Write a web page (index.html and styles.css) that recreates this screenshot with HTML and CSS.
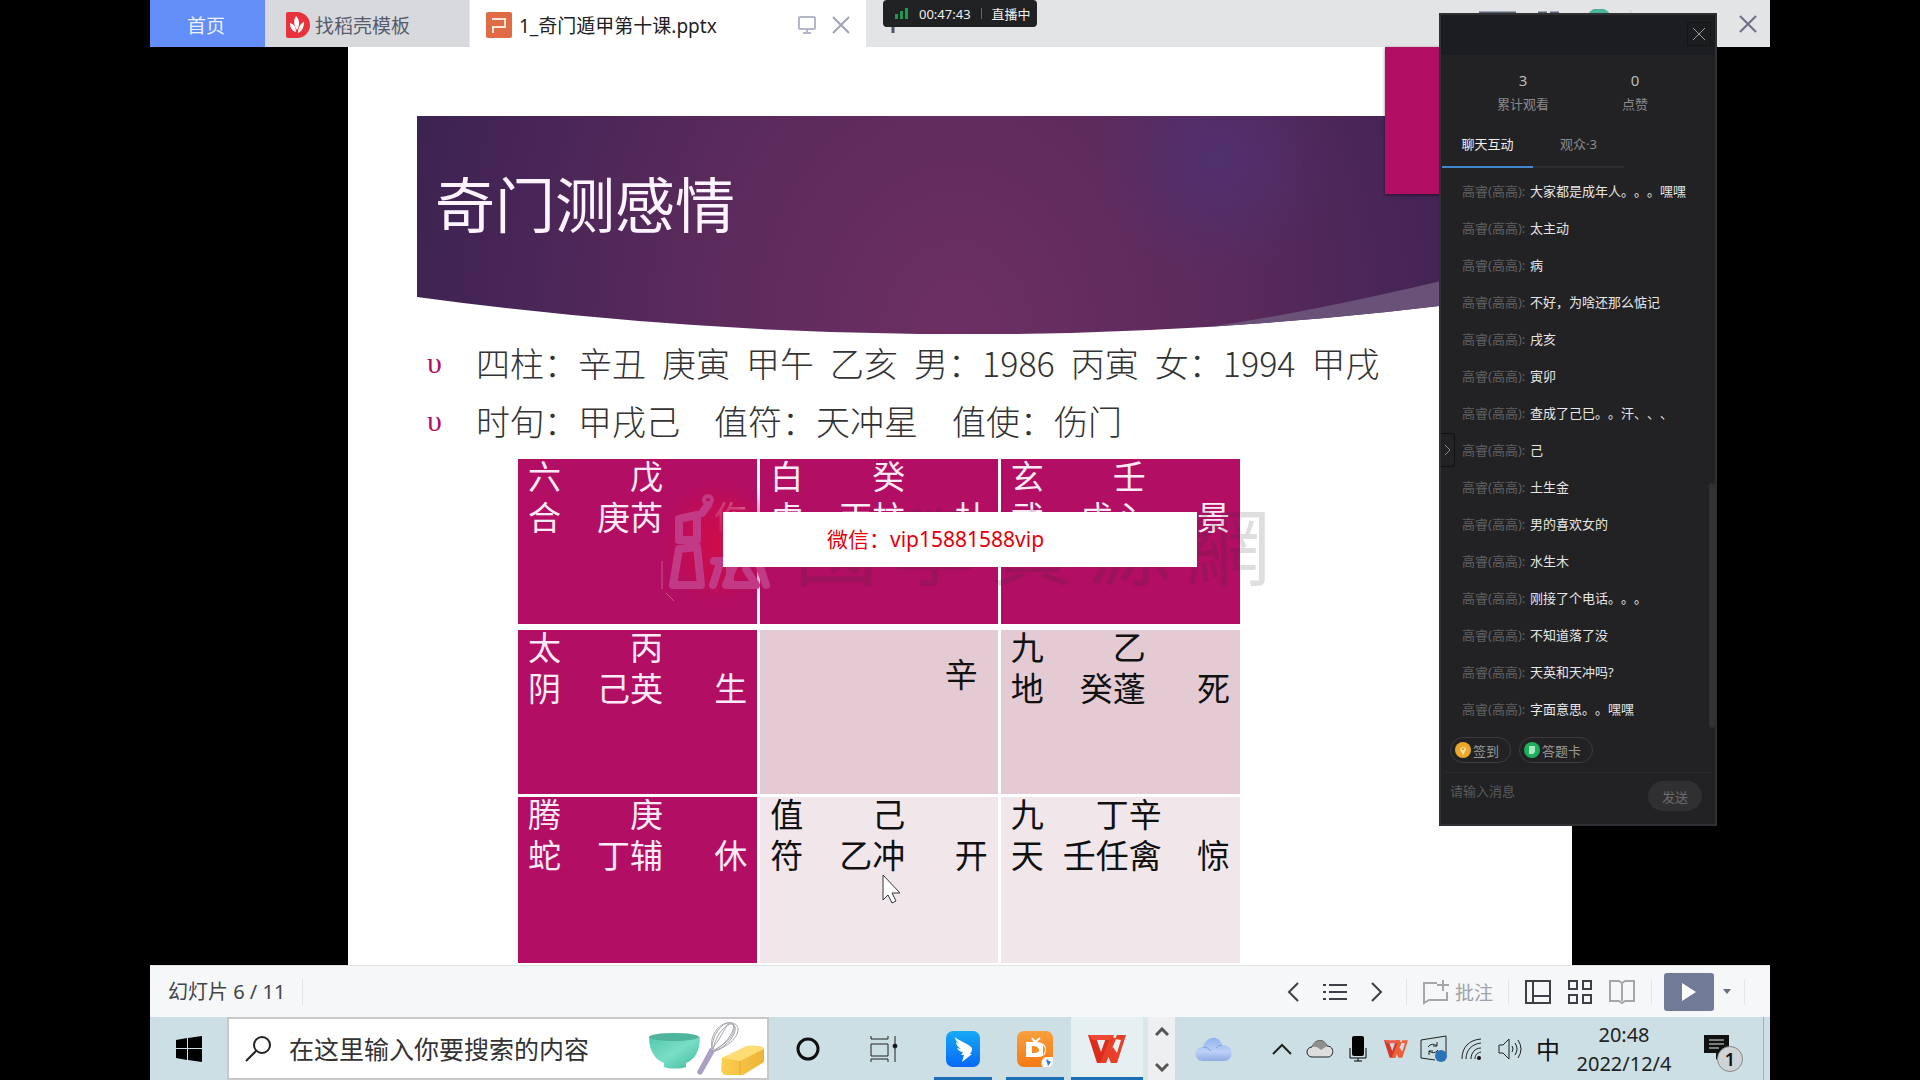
FILE: index.html
```html
<!DOCTYPE html>
<html lang="zh-CN">
<head>
<meta charset="utf-8">
<title>1_奇门遁甲第十课.pptx</title>
<link rel="stylesheet" href="styles.css">
</head>
<body>
<div class="screen">
  <header class="tabbar">
    <button class="tab tab-home">首页</button>
    <button class="tab tab-template">
      <svg width="24" height="26" viewBox="0 0 24 26"><path d="M2 0h9a13 13 0 0 1 0 26H2a2 2 0 0 1-2-2V2a2 2 0 0 1 2-2z" fill="#e8323c"/><path d="M10 4c4 4 4 9 1 14-3-5-4-9-1-14zM4 11c4 1 6 4 6 9-4-1-6-4-6-9zM18 10c0 5-2 9-6 11 0-5 2-9 6-11z" fill="#fff"/></svg>
      <span>找稻壳模板</span>
    </button>
    <div class="tab tab-file">
      <svg width="26" height="26" viewBox="0 0 26 26"><rect width="26" height="26" rx="2" fill="#e06c45"/><path d="M6 7h13v8H7v6" fill="none" stroke="#fbe6dd" stroke-width="2"/></svg>
      <span class="file-name">1_奇门遁甲第十课.pptx</span>
      <button class="icon-button" aria-label="放映">
        <svg width="18" height="20" viewBox="0 0 18 20" fill="none" stroke="#b3b7c6" stroke-width="2"><rect x="1" y="2" width="16" height="12" rx="1"/><path d="M9 14v4M5 18h8"/></svg>
      </button>
      <button class="icon-button" aria-label="关闭标签">
        <svg width="18" height="18" viewBox="0 0 18 18" stroke="#9fa3b2" stroke-width="2"><path d="M1 1l16 16M17 1L1 17"/></svg>
      </button>
    </div>
    <button class="new-tab" aria-label="新建"><svg width="16" height="16" viewBox="0 0 16 16" stroke="#4a5468" stroke-width="3"><path d="M8 0v16M0 8h16"/></svg></button>
    <div class="window-tools">
      <svg width="160" height="30" viewBox="0 0 160 30"><path d="M0 4h37M59 4h9M71 4h9" stroke="#5a6275" stroke-width="3"/><circle cx="120" cy="12" r="13" fill="#4bb59b"/><path d="M152 1v20" stroke="#c9cbd0"/></svg>
      <button class="icon-button" aria-label="关闭窗口">
        <svg width="18" height="18" viewBox="0 0 18 18" stroke="#6a7081" stroke-width="2"><path d="M1 1l16 16M17 1L1 17"/></svg>
      </button>
    </div>
    <div class="live-pill">
      <svg width="14" height="11" viewBox="0 0 14 11" fill="#1f9a4c"><rect y="6" width="3" height="5"/><rect x="5" y="3" width="3" height="8"/><rect x="10" width="3" height="11"/></svg>
      <span>00:47:43</span><i class="pill-line"></i><span>直播中</span>
    </div>
  </header>

  <main class="stage">
    <section class="slide">
      <div class="ribbon"></div>
      <div class="banner">
        <svg class="banner-art" viewBox="0 0 1086 218" preserveAspectRatio="none">
          <defs>
            <radialGradient id="glow" gradientUnits="userSpaceOnUse" cx="540" cy="215" r="590" gradientTransform="translate(0 -43) scale(1 1.2)">
              <stop offset="0" stop-color="#6d2f63"/><stop offset=".45" stop-color="#5b2a5c"/><stop offset=".8" stop-color="#452556"/><stop offset="1" stop-color="#3b2351"/>
            </radialGradient>
            <radialGradient id="spot" gradientUnits="userSpaceOnUse" cx="800" cy="42" r="120">
              <stop offset="0" stop-color="#50306f"/><stop offset="1" stop-color="#50306f" stop-opacity="0"/>
            </radialGradient>
            <clipPath id="curve"><path d="M0 0H1086V182Q543 255 0 181Z"/></clipPath>
          </defs>
          <g clip-path="url(#curve)">
            <rect width="1086" height="218" fill="url(#glow)"/>
            <rect width="1086" height="218" fill="url(#spot)"/>
            <path d="M785 212Q910 194 1086 150V218H785Z" fill="#6a5178"/>
          </g>
        </svg>
        <h1>奇门测感情</h1>
      </div>
      <ul class="points">
        <li class="spaced"><span>四柱：辛丑</span><span>庚寅</span><span>甲午</span><span>乙亥</span><span>男：1986</span><span>丙寅</span><span>女：1994</span><span>甲戌</span></li>
        <li>时旬：甲戌己　值符：天冲星　值使：伤门</li>
      </ul>
      <div class="board">
        <table>
          <tr class="row-top">
            <td><div class="cell"><span>六<br>合</span><span class="stem">戊<br>庚芮</span><span class="gate">伤</span></div></td>
            <td><div class="cell"><span>白<br>虎</span><span class="stem">癸<br>丙柱</span><span class="gate">杜</span></div></td>
            <td><div class="cell"><span>玄<br>武</span><span class="stem">壬<br>戊心</span><span class="gate">景</span></div></td>
          </tr>
          <tr class="row-middle">
            <td class="strong"><div class="cell"><span>太<br>阴</span><span class="stem">丙<br>己英</span><span class="gate">生</span></div></td>
            <td><div class="center-stem">辛</div></td>
            <td><div class="cell"><span>九<br>地</span><span class="stem">乙<br>癸蓬</span><span class="gate">死</span></div></td>
          </tr>
          <tr class="row-bottom">
            <td class="strong"><div class="cell"><span>腾<br>蛇</span><span class="stem">庚<br>丁辅</span><span class="gate">休</span></div></td>
            <td><div class="cell"><span>值<br>符</span><span class="stem">己<br>乙冲</span><span class="gate">开</span></div></td>
            <td><div class="cell cell-wide"><span>九<br>天</span><span class="stem">丁辛<br>壬任禽</span><span class="gate">惊</span></div></td>
          </tr>
        </table>
        <div class="watermark">
          <svg width="124" height="140" viewBox="0 0 124 140">
            <defs><radialGradient id="seal"><stop offset="0" stop-color="#cf0d49"/><stop offset=".6" stop-color="#c40c52" stop-opacity=".75"/><stop offset="1" stop-color="#b40c60" stop-opacity="0"/></radialGradient></defs>
            <rect width="124" height="140" fill="url(#seal)"/>
            <g fill="none" stroke="#c23a86" stroke-width="8" stroke-linecap="round" stroke-linejoin="round"><circle cx="52" cy="27" r="2"/><path d="M23 47v20h18V42L23 46M46 40l6-8M23 76l-6 36h28l-4-38zM58 88h20M64 90l-7 22M74 92v20M84 78L70 112h30l-10-16M100 82l10 30"/></g>
            <path d="M6 88v28M10 120l8 8" stroke="#cf5a76" stroke-width="1"/>
          </svg>
          <span>國</span><span>學</span><span>資</span><span>源</span><span>網</span>
        </div>
        <div class="contact">微信：vip15881588vip</div>
        <svg class="cursor" width="20" height="30" viewBox="0 0 20 30"><path d="M1 1v25l5-5 4 8 4-2-4-8h8z" fill="#fff" stroke="#34343c" stroke-width="1"/></svg>
      </div>
    </section>
  </main>

  <footer class="statusbar">
    <span class="page-count">幻灯片 6 / 11</span><i class="divider"></i>
    <div class="view-tools">
      <button class="slot" aria-label="上一页"><svg width="12" height="20" viewBox="0 0 12 20"><path d="M11 1L2 10l9 9"/></svg></button>
      <button class="slot" aria-label="列表"><svg width="24" height="18" viewBox="0 0 24 18"><path d="M0 2h3M0 9h3M0 16h3M6 2h18M6 9h18M6 16h18"/></svg></button>
      <button class="slot" aria-label="下一页"><svg width="12" height="20" viewBox="0 0 12 20"><path d="M1 1l9 9-9 9"/></svg></button>
      <i class="divider"></i>
      <button class="comment"><svg width="26" height="26" viewBox="0 0 26 26"><path d="M14 4H1v20l5-3h18v-8M20 1v11M14 6h12"/></svg><span>批注</span></button>
      <i class="divider"></i>
      <button class="slot" aria-label="普通视图"><svg width="26" height="24" viewBox="0 0 26 24"><path d="M1 1h24v22H1zM8 1v22M8 16h17"/></svg></button>
      <button class="slot" aria-label="幻灯片浏览"><svg width="24" height="24" viewBox="0 0 24 24"><path d="M1 1h8v8H1zM15 1h8v8h-8zM1 15h8v8H1zM15 15h8v8h-8z"/></svg></button>
      <button class="slot pale" aria-label="阅读视图"><svg width="26" height="26" viewBox="0 0 26 26"><path d="M1 2h9l3 2 3-2h9v20h-9l-3 2-3-2H1zM13 4v18"/></svg></button>
      <i class="divider"></i>
      <button class="play" aria-label="从当前幻灯片开始播放"><svg width="16" height="20" viewBox="0 0 16 20"><path d="M1 1l14 9-14 9z" fill="#fff"/></svg></button>
      <button class="caret" aria-label="播放选项"><svg width="8" height="5" viewBox="0 0 8 5"><path d="M0 0h8L4 5z"/></svg></button>
      <i class="divider"></i>
    </div>
  </footer>

  <nav class="taskbar">
    <button class="start" aria-label="开始"><svg width="26" height="26" viewBox="0 0 26 26"><path d="M0 4l11-2v10H0zM12 2l14-2v12H12zM0 13h11v11L0 22zM12 13h14v13l-14-2z"/></svg></button>
    <div class="search">
      <svg width="27" height="27" viewBox="0 0 27 27" fill="none" stroke="#222" stroke-width="2"><circle cx="17" cy="10" r="8"/><path d="M11 16L1 26"/></svg>
      <input type="text" aria-label="搜索" placeholder="在这里输入你要搜索的内容">
      <svg width="118" height="56" viewBox="0 0 118 56">
        <defs>
          <linearGradient id="bowl" x2="1" y2="1"><stop offset="0" stop-color="#55c8ad"/><stop offset=".5" stop-color="#79dfc5"/><stop offset="1" stop-color="#3fb79c"/></linearGradient>
          <linearGradient id="butter" x2="1"><stop offset="0" stop-color="#fbcf51"/><stop offset="1" stop-color="#eeb336"/></linearGradient>
        </defs>
        <path d="M2 16c0 15 7 23 15 26v4c5 2 17 2 22 0v-4c8-3 14-11 14-26z" fill="url(#bowl)"/><ellipse cx="27" cy="16" rx="25" ry="4" fill="#4fb59d"/>
        <path d="M50 51l13-24 5 3-13 23q-4 2-5-2z" fill="#aaa0c4"/>
        <g fill="none" stroke="#a5a5ac" stroke-width="1"><path d="M65 28C62 14 73 0 85 2s6 20-17 28M65 28C65 12 77 0 84 2s-1 18-17 28M66 29C69 12 80 2 86 3c7 5-3 21-18 27M65 28C75 16 79 3 83 2M67 29C83 21 90 10 86 3"/></g>
        <path d="M75 37l25-12q15-1 17 3v13L96 54H77l-3-4z" fill="url(#butter)"/><path d="M75 37l25-12q15-1 17 3L93 40z" fill="#ffdd75"/><path d="M93 40v14" stroke="#e7a92c" stroke-width="1"/>
      </svg>
    </div>
    <button class="cortana" aria-label="Cortana"><svg width="26" height="26" viewBox="0 0 26 26"><circle cx="13" cy="13" r="10" fill="none" stroke="#111" stroke-width="3"/></svg></button>
    <button class="taskview" aria-label="任务视图"><svg width="28" height="26" viewBox="0 0 28 26" fill="none" stroke="#222" stroke-width="1"><path d="M1 0v3h17V0M1 8h17v12H1zM1 26v-3h17v3M25 0v26"/><circle cx="25" cy="10" r="2" fill="#111"/></svg></button>
    <button class="app" aria-label="钉钉"><svg width="36" height="36" viewBox="0 0 36 36"><defs><linearGradient id="ding" x2="0" y2="1"><stop offset="0" stop-color="#16aaf5"/><stop offset="1" stop-color="#0868f7"/></linearGradient></defs><rect x="1" width="34" height="36" rx="7" fill="url(#ding)"/><path d="M10 6c4 4 12 6 16 10 2 2 1 4-1 7h2l-10 8 2-7h-3l2-3c-3 0-5-2-6-4l4 1c-3-2-5-4-5-7l4 2c-3-2-5-4-5-7z" fill="#fff"/></svg></button>
    <button class="app" aria-label="钉钉直播"><svg width="38" height="38" viewBox="0 0 38 38"><defs><linearGradient id="cast" x2="0" y2="1"><stop offset="0" stop-color="#f7a03d"/><stop offset="1" stop-color="#f67914"/></linearGradient></defs><rect x="1" y="1" width="36" height="36" rx="7" fill="url(#cast)"/><path d="M10 12h12q8 1 8 8t-8 7H10z" fill="#fff"/><path d="M16 16h2q5 1 5 4t-5 3h-2zM27 15q4 5 0 10" fill="#f58b25"/><path d="M16 8l3 4 5-4" fill="none" stroke="#fff" stroke-width="2"/><path d="M27 37a6 6 0 0 1 5-10h5v4q0 6-6 6z" fill="#fff"/><path d="M30 29l5 3-3 4z" fill="#287de0"/></svg></button>
    <button class="app app-active" aria-label="WPS"><svg width="38" height="30" viewBox="0 0 38 30"><path d="M0 1h7l6 17L19 1h6l-8 28H9z" fill="#dc2d1c"/><path d="M0 1h26l-2 5H5z" fill="#ef4936"/><path d="M12 29L23 2l5 3-10 24zM20 22l5-9 4 6 4-13-6-1 2-4h9l-9 28h-6z" fill="#e83f2b"/></svg></button>
    <div class="scroller">
      <button aria-label="向上"><svg width="14" height="10" viewBox="0 0 14 10"><path d="M1 8l6-6 6 6"/></svg></button>
      <button aria-label="向下"><svg width="14" height="10" viewBox="0 0 14 10"><path d="M1 2l6 6 6-6"/></svg></button>
    </div>
    <button class="weather" aria-label="天气"><svg width="38" height="26" viewBox="0 0 38 26"><defs><linearGradient id="sky" x2="0" y2="1"><stop offset="0" stop-color="#8fb3ee"/><stop offset=".6" stop-color="#bcd0f8"/><stop offset="1" stop-color="#8fabe3"/></linearGradient></defs><path d="M8 25a7 7 0 0 1 1-14C12 0 25-2 28 9c13 0 12 16 2 16z" fill="url(#sky)"/><path d="M9 11q5 0 8 4M28 9q-4 0-6 3" stroke="#7f9fdc" fill="none"/></svg></button>
    <div class="tray">
      <button class="tray-slot" aria-label="显示隐藏图标"><svg width="20" height="12" viewBox="0 0 20 12" fill="none" stroke="#222" stroke-width="2"><path d="M1 11l9-9 9 9"/></svg></button>
      <button class="tray-slot" aria-label="云盘"><svg width="28" height="20" viewBox="0 0 28 20" stroke="#222" stroke-width="1"><path d="M6 18a5 5 0 0 1 0-10C9 0 18-1 21 7c8 0 7 11 1 11z" fill="#ddd"/><path d="M6 8C9 0 18-1 21 7l-6 4c-3-3-6-4-9-3z" fill="#8f8f8f" stroke="none"/></svg></button>
      <button class="tray-slot" aria-label="麦克风"><svg width="18" height="26" viewBox="0 0 18 26"><rect x="3" width="12" height="20" rx="2" fill="#000"/><path d="M1 12v10h16V12M9 22v3M5 25h8" fill="none" stroke="#000" stroke-width="1"/></svg></button>
      <button class="tray-slot" aria-label="WPS 托盘"><svg width="24" height="20" viewBox="0 0 38 30"><path d="M0 1h7l6 17L19 1h6l-8 28H9z" fill="#d3372b"/><path d="M0 1h26l-2 5H5z" fill="#ee5b49"/><path d="M12 29L23 2l5 3-10 24zM20 22l5-9 4 6 4-13-6-1 2-4h9l-9 28h-6z" fill="#ee6035"/></svg></button>
      <button class="tray-slot" aria-label="同步"><svg width="28" height="28" viewBox="0 0 28 28" fill="none" stroke="#222" stroke-width="1"><path d="M1 5l25-4v18M15 25L1 23V5"/><path d="M8 12q4-5 9-1M17 7v4h-4M18 15q-4 5-9 1M9 20v-4h4"/><circle cx="21" cy="21" r="6" fill="#2a73b8" stroke="none"/></svg></button>
      <button class="tray-slot" aria-label="网络"><svg width="22" height="22" viewBox="0 0 22 22" fill="none" stroke="#222" stroke-width="1"><path d="M1 21C1 9 8 2 20 1M5 21C5 12 11 6 20 5M10 21c0-6 4-11 10-11M14 21c0-4 2-6 6-7"/><circle cx="18" cy="20" r="2" fill="#111" stroke="none"/></svg></button>
      <button class="tray-slot" aria-label="音量"><svg width="24" height="22" viewBox="0 0 24 22" fill="none" stroke="#222" stroke-width="1"><path d="M1 7h4l6-6v20l-6-6H1zM14 8q2 3 0 6M17 5q4 6 0 12M20 2q6 9 0 18"/></svg></button>
      <button class="tray-slot ime">中</button>
      <div class="clock"><time>20:48</time><time>2022/12/4</time></div>
      <button class="notice" aria-label="通知"><svg width="28" height="28" viewBox="0 0 28 28"><path d="M1 1h25v18H19l-6 7v-7H1z" fill="#111"/><path d="M6 6h15M6 10h15M6 14h10" stroke="#dfe9ec" stroke-width="1"/></svg><span class="badge">1</span></button>
      <i class="desktop-edge"></i>
    </div>
  </nav>

  <aside class="live-panel">
    <div class="panel-head"><button aria-label="关闭面板"><svg width="12" height="12" viewBox="0 0 12 12" stroke="#9a9a9c" stroke-width="1"><path d="M0 0l12 12M12 0L0 12"/></svg></button></div>
    <dl class="stats">
      <div><dd>3</dd><dt>累计观看</dt></div>
      <div><dd>0</dd><dt>点赞</dt></div>
    </dl>
    <div class="panel-tabs"><button class="current">聊天互动</button><button>观众·3</button></div>
    <ul class="chat">
      <li><b>高睿(高高):</b>大家都是成年人。。。嘿嘿</li>
      <li><b>高睿(高高):</b>太主动</li>
      <li><b>高睿(高高):</b>病</li>
      <li><b>高睿(高高):</b>不好，为啥还那么惦记</li>
      <li><b>高睿(高高):</b>戌亥</li>
      <li><b>高睿(高高):</b>寅卯</li>
      <li><b>高睿(高高):</b>查成了己巳。。汗、、、</li>
      <li><b>高睿(高高):</b>己</li>
      <li><b>高睿(高高):</b>土生金</li>
      <li><b>高睿(高高):</b>男的喜欢女的</li>
      <li><b>高睿(高高):</b>水生木</li>
      <li><b>高睿(高高):</b>刚接了个电话。。。</li>
      <li><b>高睿(高高):</b>不知道落了没</li>
      <li><b>高睿(高高):</b>天英和天冲吗?</li>
      <li><b>高睿(高高):</b>字面意思。。嘿嘿</li>
    </ul>
    <div class="chips">
      <button><svg width="16" height="16" viewBox="0 0 16 16"><circle cx="8" cy="8" r="8" fill="#e9a82c"/><path d="M8 13L5 8a3 3 0 1 1 6 0z" fill="#f8dc8e"/><circle cx="8" cy="7" r="1" fill="#d48c1a"/></svg>签到</button>
      <button><svg width="16" height="16" viewBox="0 0 16 16"><circle cx="8" cy="8" r="8" fill="#1fae5c"/><path d="M5 4h6v6l-2 2H5z" fill="#a9ecc3"/></svg>答题卡</button>
    </div>
    <div class="compose"><input type="text" aria-label="消息" placeholder="请输入消息"><button>发送</button></div>
    <i class="panel-scroll"></i>
    <button class="panel-handle" aria-label="收起"><svg width="7" height="12" viewBox="0 0 7 12" fill="none" stroke="#8a8a8c" stroke-width="1"><path d="M1 1l5 5-5 5"/></svg></button>
  </aside>
</div>
</body>
</html>
```
FILE: styles.css
```css
* { box-sizing: border-box; }

body {
  margin: 0;
  background: #000;
  font-family: "Noto Sans", "Noto Sans CJK SC", sans-serif;
  color: #333;
  text-spacing-trim: space-all;
}

button {
  display: flex;
  align-items: center;
  justify-content: center;
  margin: 0;
  padding: 0;
  border: 0;
  background: none;
  color: inherit;
  font: inherit;
}

input {
  min-width: 0;
  padding: 0;
  border: 0;
  outline: 0;
  background: none;
  font: inherit;
}

svg { display: block; flex: none; }
ul, dl, dd { margin: 0; padding: 0; list-style: none; }

.screen {
  position: relative;
  display: flex;
  flex-direction: column;
  min-height: 100vh;
  padding: 0 150px;
}

/* Document tabs */
.tabbar {
  position: relative;
  display: flex;
  height: 47px;
  background: #e3e4e6;
  font-size: 19px;
  padding-right: 13px;
}
.tab { display: flex; align-items: center; padding-top: 3px; }
.tab-home { width: 115px; padding-right: 3px; background: #638ef8; color: #eef3ff; }
.tab-template {
  width: 205px;
  justify-content: flex-start;
  gap: 5px;
  padding-left: 21px;
  border-right: 1px solid #e6e7e9;
  background: #d8d9dd;
  color: #555b6c;
}
.tab-file { width: 396px; gap: 7px; padding-left: 16px; background: #fff; color: #222; }
.file-name { flex: 1; }
.tab-file .icon-button { margin-right: 9px; }
.tab-file .icon-button:last-child { margin-right: 16px; }
.new-tab { margin-left: 19px; padding-top: 3px; }
.window-tools { display: flex; align-items: center; gap: 100px; margin-left: auto; }
.live-pill {
  position: absolute;
  top: 0;
  left: 733px;
  display: flex;
  align-items: center;
  gap: 10px;
  width: 154px;
  height: 27px;
  padding-left: 12px;
  border-radius: 4px;
  background: #202123;
  color: #eee;
  font-size: 13px;
}
.pill-line { width: 1px; height: 11px; background: #666; }

/* Slide */
.stage { display: flex; flex: 1; padding: 0 198px; }
.slide {
  position: relative;
  flex: 1;
  padding: 69px 69px 0;
  background: #fff;
}
.ribbon {
  position: absolute;
  z-index: 1;
  top: 0;
  right: 69px;
  width: 118px;
  height: 147px;
  background: #b10e64;
  box-shadow: 0 1px 3px rgba(0, 0, 0, .5);
}
.banner { position: relative; height: 218px; }
.banner-art { position: absolute; inset: 0; width: 100%; height: 100%; }
.banner h1 {
  position: relative;
  margin: 0;
  padding: 42px 0 0 18px;
  color: #fdf4ff;
  font-family: "Noto Sans CJK SC", sans-serif;
  font-size: 60px;
  font-weight: 400;
  line-height: 88px;
}
.points {
  padding: 0 0 9px 8px;
  color: #333;
  font-family: "Noto Sans CJK SC", sans-serif;
  font-size: 34px;
  font-weight: 300;
  line-height: 58px;
  white-space: nowrap;
}
.points li { display: flex; }
.points li::before {
  content: "υ";
  width: 49px;
  padding-left: 2px;
  color: #b10e64;
  font-family: "Liberation Serif", serif;
  font-size: 30px;
}
.points .spaced { gap: 16px; }
.points .spaced::before { margin-right: -16px; }

.board { position: relative; width: 722px; margin-left: 101px; }
.board table { width: 100%; border-collapse: collapse; table-layout: fixed; }
.board td {
  height: 168px;
  padding: 0 10px;
  border: 0 solid #fff;
  border-right-width: 3px;
  border-bottom-width: 3px;
  vertical-align: top;
  color: #111;
  font-family: "Noto Sans CJK SC", sans-serif;
  font-size: 33px;
  line-height: 41px;
}
.board td:last-child { border-right-width: 0; }
.board .row-top td { height: 168px; border-bottom-width: 6px; background: #b10e64; color: #fdeaf6; }
.board .row-middle td { background: #e3cad3; }
.board .row-bottom td { height: 168px; border-bottom-width: 0; background: #f1e7ea; }
.board .row-middle .strong,
.board .row-bottom .strong { background: #b10e64; color: #fdeaf6; }
.cell { display: grid; grid-template-columns: 33px 102px 1fr; margin-top: -4px; }
.cell-wide { grid-template-columns: 33px 118px 1fr; }
.stem { text-align: right; white-space: nowrap; }
.gate { padding-top: 41px; text-align: right; }
.center-stem { padding: 23px 10px 0 0; text-align: right; }

.watermark {
  position: absolute;
  top: 14px;
  left: 138px;
  display: flex;
  align-items: center;
  gap: 14px;
  color: rgba(50, 50, 50, .16);
  font-family: "Noto Sans CJK TC", sans-serif;
  font-size: 84px;
  line-height: 120px;
}
.contact {
  position: absolute;
  top: 53px;
  left: 205px;
  width: 474px;
  height: 55px;
  padding-left: 104px;
  background: #fff;
  color: #e3000b;
  font-size: 21px;
  line-height: 55px;
}
.cursor { position: absolute; top: 415px; left: 364px; }

/* Presentation status bar */
.statusbar {
  display: flex;
  align-items: center;
  height: 52px;
  padding: 0 25px 0 18px;
  border-top: 1px solid #dfe3e6;
  background: #f5f7f9;
  font-size: 20px;
}
.page-count { margin-right: 17px; padding-bottom: 2px; color: #444; }
.divider { width: 1px; height: 26px; background: #e3e5e8; }
.view-tools { display: flex; align-items: center; margin-left: auto; }
.view-tools svg { fill: none; stroke: #3d4047; stroke-width: 2; }
.slot { width: 42px; height: 38px; }
.view-tools .pale svg, .view-tools .comment svg { stroke: #a5a7ab; }
.slot + .divider { margin: 0 8px; }
.comment { gap: 6px; padding: 0 15px 0 8px; color: #a0a2a6; font-size: 19px; }
.comment + .divider { margin-right: 8px; }
.play { width: 50px; height: 38px; margin-left: 4px; border-radius: 3px; background: #707b98; }
.view-tools .play svg { stroke: none; }
.caret { width: 30px; height: 38px; padding-right: 4px; }
.view-tools .caret svg { fill: #676d7c; stroke: none; }

/* Taskbar */
.taskbar { display: flex; height: 63px; background: #cbdfe4; }
.start { width: 77px; }
.search {
  display: flex;
  flex: 0 1 542px;
  align-items: center;
  padding: 0 2px 0 16px;
  border: 2px solid #c6c8ca;
  background: #fff;
}
.search input { flex: 1; margin-left: 17px; color: #333; font-size: 25px; }
.search input::placeholder { color: #333; }
.cortana { width: 78px; }
.taskview { width: 80px; padding-right: 6px; }
.app { position: relative; width: 72px; }
.app::after {
  position: absolute;
  right: 7px;
  bottom: 0;
  left: 7px;
  height: 3px;
  background: #1a6fb5;
  content: "";
}
.app-active { background: #e6eff2; }
.app-active::after { right: 0; left: 0; }
.scroller {
  display: flex;
  flex-direction: column;
  justify-content: space-between;
  width: 32px;
  padding: 10px 0 8px;
  border-left: 5px solid #d9e7ea;
  background: #eeeff0;
}
.scroller svg { fill: none; stroke: #555; stroke-width: 3; }
.weather { width: 76px; }
.tray { display: flex; margin-left: auto; }
.tray-slot { width: 38px; }
.ime { font-size: 24px; color: #111; }
.clock {
  display: flex;
  flex-direction: column;
  justify-content: center;
  width: 114px;
  color: #222;
  font-size: 20px;
  line-height: 29px;
  text-align: center;
}
.notice { position: relative; width: 82px; padding: 0 10px 2px 0; }
.badge {
  position: absolute;
  top: 29px;
  left: 36px;
  width: 26px;
  height: 26px;
  border: 1px solid #888;
  border-radius: 50%;
  background: #cdd3d6;
  color: #111;
  font-size: 18px;
  font-weight: 600;
  line-height: 24px;
  text-align: center;
}
.desktop-edge { width: 7px; border-left: 1px solid #9db0b6; }

/* Live chat window */
.live-panel {
  position: absolute;
  z-index: 5;
  top: 13px;
  right: 203px;
  width: 278px;
  border: 2px solid #303134;
  background: #222224;
  color: #e6e6e6;
  font-size: 13px;
}
.panel-head { display: flex; justify-content: flex-end; height: 40px; padding: 7px 4px 9px 0; background: #1c1d20; }
.panel-head button { width: 24px; border: 1px solid #141416; }
.stats { display: flex; padding: 13px 24px 0 26px; text-align: center; }
.stats div { width: 114px; }
.stats dd { color: #bbb; font-size: 15px; line-height: 24px; }
.stats dt { color: #8a8a8c; line-height: 24px; }
.panel-tabs { display: flex; margin: 13px 0 5px 1px; }
.panel-tabs button { width: 91px; height: 39px; padding-bottom: 8px; border-bottom: 2px solid #2e2e30; color: #8a8a8c; }
.panel-tabs .current { border-color: #3f87d0; color: #eee; }
.chat li { display: flex; height: 37px; padding-left: 21px; line-height: 37px; white-space: nowrap; }
.chat b { width: 68px; color: #606063; font-weight: 400; }
.chips { display: flex; gap: 8px; padding: 9px 9px 9px; }
.chips button { height: 26px; gap: 2px; padding: 0 11px 0 4px; border: 1px solid #3c3c3f; border-radius: 13px; color: #999; }
.compose { display: flex; align-items: flex-start; margin: 0 3px; padding: 8px 10px 13px 6px; border-top: 1px solid #29292b; }
.compose input { flex: 1; height: 20px; color: #666; }
.compose input::placeholder { color: #5a5a5d; }
.compose button { width: 54px; height: 30px; border-radius: 15px; background: #303032; color: #6c6c6f; }
.panel-scroll { position: absolute; top: 468px; right: 0; width: 6px; height: 245px; border-radius: 3px; background: #323235; }
.panel-handle { position: absolute; top: 418px; left: 0; width: 14px; height: 34px; border: 1px solid #111; border-left: 0; border-radius: 0 3px 3px 0; background: #222224; }
```
